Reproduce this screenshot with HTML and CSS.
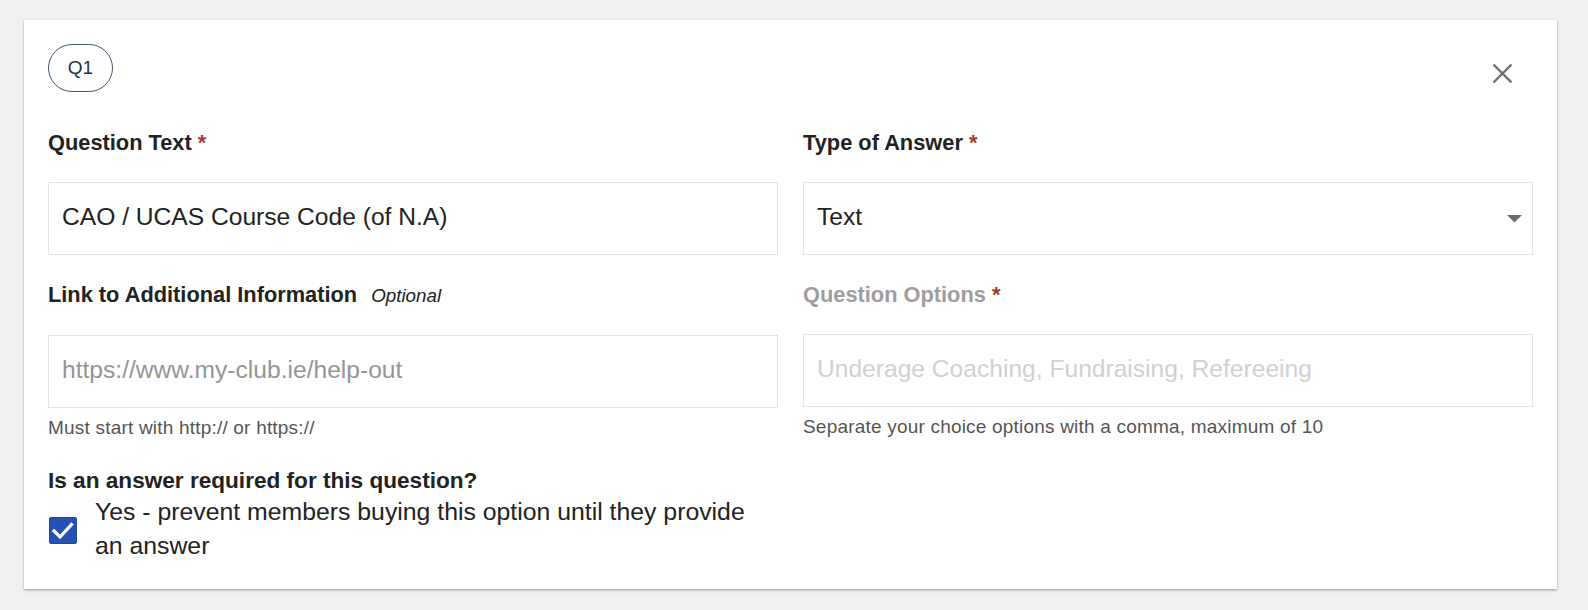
FILE: index.html
```html
<!DOCTYPE html>
<html lang="en">
<head>
<meta charset="utf-8">
<title>Question</title>
<link rel="stylesheet" href="styles.css">
</head>
<body>
<div class="page">
  <div class="card">
    <div class="card-header">
      <span class="pill">Q1</span>
      <button class="close-btn" type="button" aria-label="Close">
        <svg width="21" height="21" viewBox="0 0 21 21"><path d="M1.5 1.5 L19.5 19.5 M19.5 1.5 L1.5 19.5" stroke="#6e6e6e" stroke-width="2.4" fill="none" stroke-linecap="butt"/></svg>
      </button>
    </div>
    <div class="grid">
      <div class="field">
        <div class="label">Question Text <span class="req">*</span></div>
        <input class="input" type="text" value="CAO / UCAS Course Code (of N.A)">
      </div>
      <div class="field">
        <div class="label">Type of Answer <span class="req">*</span></div>
        <div class="select">
          <span class="select-value">Text</span>
          <svg class="arrow" width="15" height="8" viewBox="0 0 15 8"><polygon points="0,0 15,0 7.5,7.5" fill="#6b6b6b"/></svg>
        </div>
      </div>
      <div class="field">
        <div class="label">Link to Additional Information<span class="optional">Optional</span></div>
        <input class="input" type="text" placeholder="https://www.my-club.ie/help-out">
        <div class="help">Must start with http:// or https://</div>
      </div>
      <div class="field">
        <div class="label label-disabled">Question Options <span class="req">*</span></div>
        <input class="input input-disabled" type="text" placeholder="Underage Coaching, Fundraising, Refereeing" disabled>
        <div class="help">Separate your choice options with a comma, maximum of 10</div>
      </div>
    </div>
    <div class="required">
      <div class="label label-required">Is an answer required for this question?</div>
      <label class="check-row">
        <span class="checkbox">
          <svg width="28" height="27" viewBox="0 0 28 27"><polyline points="5,14 11,20 22.5,7.5" fill="none" stroke="#ffffff" stroke-width="3.2" stroke-linecap="square"/></svg>
        </span>
        <span class="check-text">Yes - prevent members buying this option until they provide an answer</span>
      </label>
    </div>
  </div>
</div>
</body>
</html>
```

FILE: styles.css
```css
* {
  box-sizing: border-box;
}

html, body {
  margin: 0;
  padding: 0;
}

body {
  background: #f1f1f1;
  font-family: "Liberation Sans", Arial, Helvetica, sans-serif;
  color: #222222;
}

.page {
  padding: 20px 31px 22px 24px;
}

.card {
  background: #ffffff;
  padding: 24px 24px 26px 24px;
  box-shadow: 0 1px 2px rgba(0, 0, 0, 0.28), 0 2px 4px rgba(0, 0, 0, 0.08);
}

.card-header {
  display: flex;
  justify-content: space-between;
  align-items: flex-start;
  height: 48px;
}

.pill {
  display: flex;
  align-items: center;
  justify-content: center;
  width: 65px;
  height: 48px;
  border: 1px solid #3e566f;
  border-radius: 24px;
  font-size: 19px;
  color: #1c3350;
}

.close-btn {
  display: flex;
  border: none;
  background: transparent;
  padding: 19px 20px 8px 20px;
  margin: 0;
  cursor: pointer;
}

.grid {
  display: grid;
  grid-template-columns: 1fr 1fr;
  column-gap: 25px;
  row-gap: 27px;
  margin-top: 38px;
}

.field {
  display: flex;
  flex-direction: column;
}

.label {
  font-size: 21.8px;
  line-height: 26px;
  font-weight: bold;
  color: #222222;
  white-space: nowrap;
}

.label-required {
  font-size: 22.6px;
}

.label-disabled {
  color: #9d9d9d;
}

.req {
  color: #a33a28;
}

.optional {
  font-weight: normal;
  font-style: italic;
  font-size: 18.8px;
  margin-left: 14px;
  color: #222222;
}

.input {
  margin-top: 26px;
  width: 100%;
  height: 73px;
  border: 1px solid #e3e3e3;
  border-radius: 0;
  padding: 0 13px 3px 13px;
  font-family: "Liberation Sans", Arial, Helvetica, sans-serif;
  font-size: 24.6px;
  color: #222222;
  background: #ffffff;
  outline: none;
}

.input::placeholder {
  color: #959595;
}

.input-disabled::placeholder {
  color: #d0d0d0;
}

.select {
  margin-top: 26px;
  height: 73px;
  border: 1px solid #e3e3e3;
  display: flex;
  align-items: center;
  justify-content: space-between;
  padding: 0 10px 3px 13px;
  font-size: 24.6px;
  color: #222222;
}

.arrow {
  display: block;
  margin-top: 3px;
}

.help {
  margin-top: 8px;
  font-size: 19px;
  line-height: 24px;
  letter-spacing: 0.2px;
  color: #555555;
}

.required {
  margin-top: 28px;
}

.check-row {
  display: flex;
  align-items: flex-start;
  gap: 18px;
  width: 700px;
  margin-top: 1px;
}

.checkbox {
  flex: none;
  display: flex;
  width: 28px;
  height: 27px;
  margin-top: 22px;
  margin-left: 1px;
  background: #2451b3;
  border-radius: 3px;
  box-shadow: inset 0 0 0 1px #1f479e;
}

.check-text {
  font-size: 24.8px;
  line-height: 34px;
  color: #222222;
}
```
